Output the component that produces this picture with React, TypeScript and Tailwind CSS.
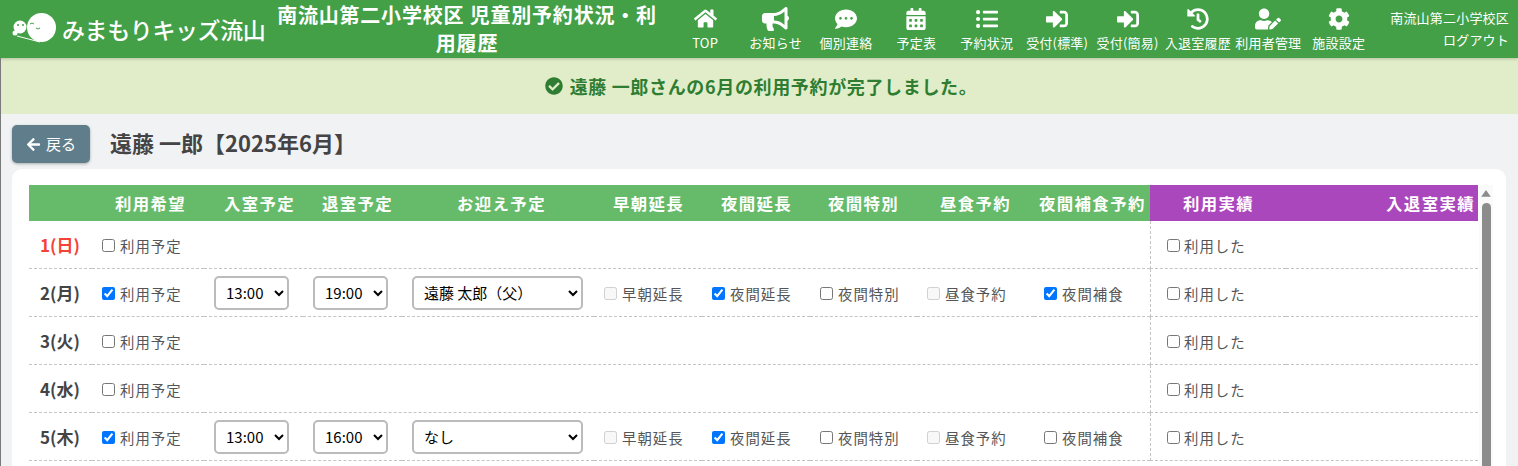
import React from 'react';
import {
  FaArrowLeft,
  FaBullhorn,
  FaCalendarAlt,
  FaCheckCircle,
  FaCog,
  FaCommentDots,
  FaHistory,
  FaHome,
  FaListUl,
  FaSignInAlt,
  FaUserEdit,
} from 'react-icons/fa';

const navItems = [
  { label: 'TOP', icon: FaHome, iconClass: 'h-[23px] w-[23px]' },
  { label: 'お知らせ', icon: FaBullhorn, iconClass: 'h-[24px] w-[27px]' },
  { label: '個別連絡', icon: FaCommentDots, iconClass: 'h-[22px] w-[22px]' },
  { label: '予定表', icon: FaCalendarAlt, iconClass: 'h-[22px] w-[20px]' },
  { label: '予約状況', icon: FaListUl, iconClass: 'h-[22px] w-[22px]' },
  { label: '受付(標準)', icon: FaSignInAlt, iconClass: 'h-[22px] w-[22px]' },
  { label: '受付(簡易)', icon: FaSignInAlt, iconClass: 'h-[22px] w-[22px]' },
  { label: '入退室履歴', icon: FaHistory, iconClass: 'h-[22px] w-[22px]' },
  { label: '利用者管理', icon: FaUserEdit, iconClass: 'h-[22px] w-[26px]' },
  { label: '施設設定', icon: FaCog, iconClass: 'h-[22px] w-[22px]' },
];

const headers = [
  { label: '', className: '' },
  { label: '利用希望', className: 'pl-[23px]' },
  { label: '入室予定', className: 'pl-[20px]' },
  { label: '退室予定', className: 'pl-[19px]' },
  { label: 'お迎え予定', className: 'pl-[55px]' },
  { label: '早朝延長', className: 'pl-[19px]' },
  { label: '夜間延長', className: 'pl-[19px]' },
  { label: '夜間特別', className: 'pl-[18px]' },
  { label: '昼食予約', className: 'pl-[23px]' },
  { label: '夜間補食予約', className: 'pl-[5px]' },
];

interface Row {
  day: string;
  red?: boolean;
  reserved?: { in: string; out: string; pickup: string; night: boolean; snack: boolean };
}

const rows: Row[] = [
  { day: '1(日)', red: true },
  { day: '2(月)', reserved: { in: '13:00', out: '19:00', pickup: '遠藤 太郎（父）', night: true, snack: true } },
  { day: '3(火)' },
  { day: '4(水)' },
  { day: '5(木)', reserved: { in: '13:00', out: '16:00', pickup: 'なし', night: true, snack: false } },
];

const rowLine = 'border-b border-dashed border-[#c4c4c4]';

const Check: React.FC<{ label: string; checked?: boolean; disabled?: boolean; tight?: boolean }> = ({
  label,
  checked,
  disabled,
  tight,
}) => (
  <label
    className={`flex translate-y-px items-center text-[14.4px] tracking-[1px] text-[#555] ${tight ? 'gap-[4px]' : 'gap-[5px]'}`}
  >
    <input type="checkbox" defaultChecked={checked} disabled={disabled} className="m-0 h-[13px] w-[13px]" />
    {label}
  </label>
);

const Picker: React.FC<{ value: string; className: string }> = ({ value, className }) => (
  <select
    defaultValue={value}
    className={`h-[34px] rounded-[5px] border-2 border-[#bbbbbb] bg-white pl-[6px] text-[15px] text-black ${className}`}
  >
    <option>{value}</option>
  </select>
);

const App: React.FC = () => {
  return (
    <div className="relative h-[466px] w-[1518px] overflow-hidden bg-[#f1f2f4] font-['Noto_Sans_CJK_JP','Noto_Sans',sans-serif]">
      <div className="absolute top-[58px] bottom-0 left-0 z-20 w-px bg-[#7a7a7a]" />

      {/* Header */}
      <header className="relative z-10 flex h-[58px] items-center bg-[#43a047] text-white shadow-[0_1px_3px_rgba(0,0,0,0.2)]">
        <div className="flex w-[272px] items-center pl-[12px]">
          <svg width="46" height="32" viewBox="0 0 46 32" className="shrink-0">
            <circle cx="29.5" cy="14.5" r="14.5" fill="#fff" />
            <circle cx="8" cy="14" r="6.5" fill="#fff" />
            <circle cx="3" cy="20" r="2.5" fill="#fff" />
            <path d="M5 23 L28 29" stroke="#fff" strokeWidth="1" />
            <circle cx="6" cy="12" r="1" fill="#43a047" />
            <circle cx="11" cy="12" r="1" fill="#43a047" />
            <path d="M18 11 q2 -2 4 0 M24 15 q2 2 4 0" stroke="#43a047" strokeWidth="1" fill="none" />
          </svg>
          <span className="ml-[4px] whitespace-nowrap text-[23px] font-medium leading-none tracking-[-0.4px]">
            みまもりキッズ流山
          </span>
        </div>
        <h1 className="mr-[8px] w-[390px] text-center text-[20px] font-bold leading-[28px] tracking-[0.8px]">
          南流山第二小学校区 児童別予約状況・利用履歴
        </h1>
        <nav className="flex">
          {navItems.map((item) => (
            <div key={item.label} className="flex w-[70.4px] flex-col items-center">
              <div className="flex h-[24px] items-center">
                <item.icon className={item.iconClass} />
              </div>
              <span className="mt-[3px] whitespace-nowrap text-[13px] leading-[18px] tracking-[0.2px]">{item.label}</span>
            </div>
          ))}
        </nav>
        <div className="flex-1 pr-[9px] text-right text-[13px] leading-[22px] tracking-[0.2px]">
          <div className="whitespace-nowrap">南流山第二小学校区</div>
          <div>ログアウト</div>
        </div>
      </header>

      {/* Banner */}
      <div className="flex h-[56px] items-center justify-center gap-[7px] bg-[#e1edc8] pl-[4px] text-[18px] font-bold tracking-[0.65px] text-[#2e7d32]">
        <FaCheckCircle className="h-[18px] w-[18px]" />
        <span>遠藤 一郎さんの6月の利用予約が完了しました。</span>
      </div>

      {/* Title */}
      <div className="flex items-center px-[12px] pt-[11px]">
        <button className="flex h-[38px] w-[78px] items-center justify-center gap-[5px] rounded-[5px] bg-[#607d8b] text-[15px] text-white shadow-[0_1px_3px_rgba(0,0,0,0.3)]">
          <FaArrowLeft className="h-[15px] w-[15px]" />
          戻る
        </button>
        <h2 className="mb-[4px] ml-[20px] text-[22px] font-bold text-[#444]">遠藤 一郎【2025年6月】</h2>
      </div>

      {/* Table card */}
      <div className="mx-[12px] mt-[6px] flex h-[400px] rounded-[10px] bg-white pl-[17px] pt-[16px]">
        <table className="w-[1449px] table-fixed self-start border-separate border-spacing-0">
          <colgroup>
            <col className="w-[63px]" />
            <col className="w-[112px]" />
            <col className="w-[99px]" />
            <col className="w-[99px]" />
            <col className="w-[192px]" />
            <col className="w-[108px]" />
            <col className="w-[108px]" />
            <col className="w-[107px]" />
            <col className="w-[117px]" />
            <col className="w-[116px]" />
            <col className="w-[136px]" />
            <col className="w-[192px]" />
          </colgroup>
          <thead>
            <tr className="h-[36px] text-[16.4px] font-bold tracking-[1.4px] text-white">
              {headers.map((h, i) => (
                <th key={i} className={`bg-[#66bb6a] text-left font-bold whitespace-nowrap ${h.className}`}>
                  {h.label}
                </th>
              ))}
              <th className="bg-[#ab47bc] pl-[33px] text-left font-bold whitespace-nowrap">利用実績</th>
              <th className="bg-[#ab47bc] pr-[3px] text-right font-bold whitespace-nowrap">入退室実績</th>
            </tr>
          </thead>
          <tbody>
            {rows.map((row) => (
              <tr key={row.day} className="h-[48px]">
                <td className={`pl-[11px] text-[17px] font-bold ${rowLine} ${row.red ? 'text-[#f44336]' : 'text-[#444]'}`}>
                  {row.day}
                </td>
                <td className={`pl-[10px] ${rowLine}`}>
                  <Check label="利用予定" checked={!!row.reserved} />
                </td>
                {row.reserved ? (
                  <>
                    <td className={`pl-[10px] ${rowLine}`}>
                      <Picker value={row.reserved.in} className="w-[75px]" />
                    </td>
                    <td className={`pl-[10px] ${rowLine}`}>
                      <Picker value={row.reserved.out} className="w-[75px]" />
                    </td>
                    <td className={`pl-[10px] ${rowLine}`}>
                      <Picker value={row.reserved.pickup} className="w-[171px]" />
                    </td>
                    <td className={`pl-[10px] ${rowLine}`}>
                      <Check label="早朝延長" disabled />
                    </td>
                    <td className={`pl-[10px] ${rowLine}`}>
                      <Check label="夜間延長" checked={row.reserved.night} />
                    </td>
                    <td className={`pl-[10px] ${rowLine}`}>
                      <Check label="夜間特別" />
                    </td>
                    <td className={`pl-[10px] ${rowLine}`}>
                      <Check label="昼食予約" disabled />
                    </td>
                    <td className={`pl-[10px] ${rowLine}`}>
                      <Check label="夜間補食" checked={row.reserved.snack} />
                    </td>
                  </>
                ) : (
                  <td colSpan={8} className={rowLine} />
                )}
                <td className={`border-l border-dashed border-l-[#c4c4c4] pl-[16px] ${rowLine}`}>
                  <Check label="利用した" tight />
                </td>
                <td className={rowLine} />
              </tr>
            ))}
          </tbody>
        </table>
        {/* Scrollbar */}
        <div className="ml-[1px] flex h-full w-[14px] flex-col items-center bg-[#fafafa] pt-[5px]">
          <svg width="10" height="7" viewBox="0 0 10 7">
            <path d="M5 0 L10 7 L0 7 Z" fill="#8c8c8c" />
          </svg>
          <div className="mt-[6px] h-full w-[9px] rounded-t-[5px] bg-[#8c8c8c]" />
        </div>
      </div>
    </div>
  );
};

export default App;
